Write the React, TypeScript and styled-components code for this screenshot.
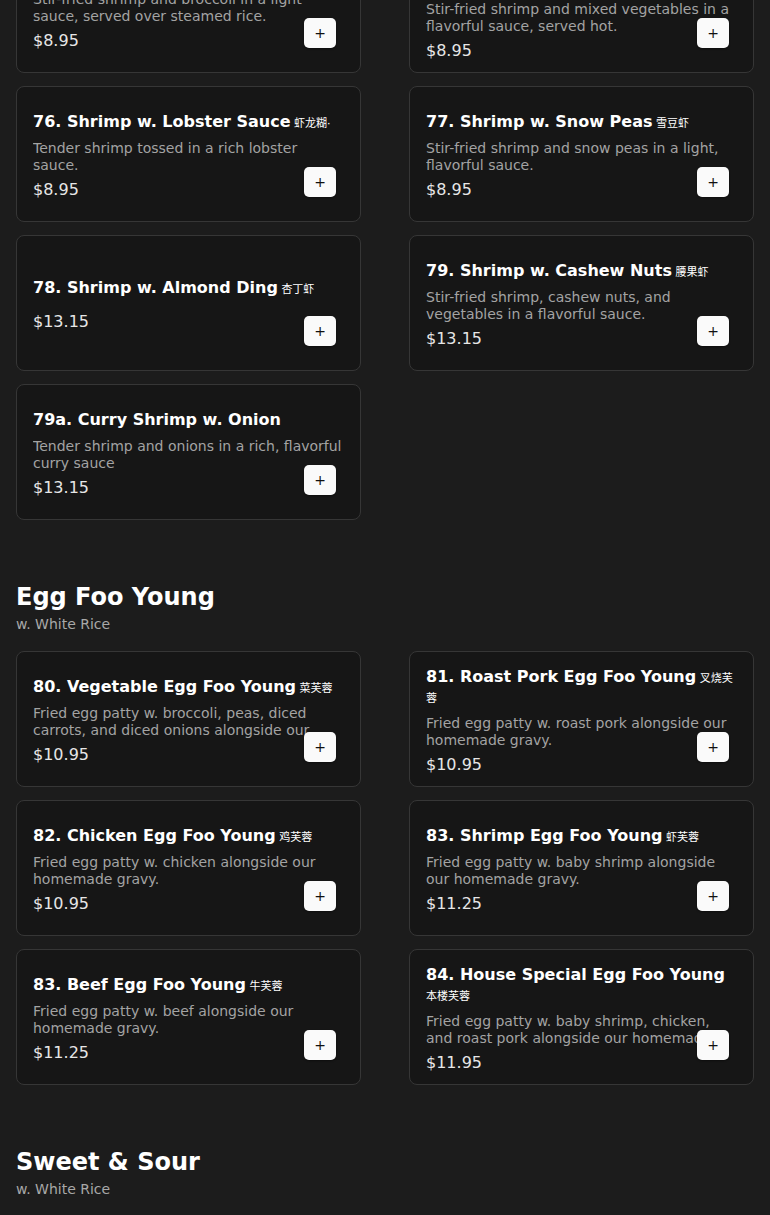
import styled, { createGlobalStyle } from "styled-components";

type MenuItem = {
  number: string;
  name: string;
  zh?: string;
  description?: string;
  price: string;
};

type Section = {
  title?: string;
  subtitle?: string;
  items: MenuItem[];
};

const sections: Section[] = [
  {
    items: [
      {
        number: "74",
        name: "Shrimp w. Broccoli",
        zh: "芥兰虾",
        description: "Stir-fried shrimp and broccoli in a light sauce, served over steamed rice.",
        price: "$8.95",
      },
      {
        number: "75",
        name: "Shrimp w. Mixed Chinese Vegetables",
        zh: "什菜虾",
        description: "Stir-fried shrimp and mixed vegetables in a flavorful sauce, served hot.",
        price: "$8.95",
      },
      {
        number: "76",
        name: "Shrimp w. Lobster Sauce",
        zh: "虾龙糊·",
        description: "Tender shrimp tossed in a rich lobster sauce.",
        price: "$8.95",
      },
      {
        number: "77",
        name: "Shrimp w. Snow Peas",
        zh: "雪豆虾",
        description: "Stir-fried shrimp and snow peas in a light, flavorful sauce.",
        price: "$8.95",
      },
      {
        number: "78",
        name: "Shrimp w. Almond Ding",
        zh: "杏丁虾",
        price: "$13.15",
      },
      {
        number: "79",
        name: "Shrimp w. Cashew Nuts",
        zh: "腰果虾",
        description: "Stir-fried shrimp, cashew nuts, and vegetables in a flavorful sauce.",
        price: "$13.15",
      },
      {
        number: "79a",
        name: "Curry Shrimp w. Onion",
        description: "Tender shrimp and onions in a rich, flavorful curry sauce",
        price: "$13.15",
      },
    ],
  },
  {
    title: "Egg Foo Young",
    subtitle: "w. White Rice",
    items: [
      {
        number: "80",
        name: "Vegetable Egg Foo Young",
        zh: "菜芙蓉",
        description:
          "Fried egg patty w. broccoli, peas, diced carrots, and diced onions alongside our homemade gravy.",
        price: "$10.95",
      },
      {
        number: "81",
        name: "Roast Pork Egg Foo Young",
        zh: "叉烧芙蓉",
        description: "Fried egg patty w. roast pork alongside our homemade gravy.",
        price: "$10.95",
      },
      {
        number: "82",
        name: "Chicken Egg Foo Young",
        zh: "鸡芙蓉",
        description: "Fried egg patty w. chicken alongside our homemade gravy.",
        price: "$10.95",
      },
      {
        number: "83",
        name: "Shrimp Egg Foo Young",
        zh: "虾芙蓉",
        description: "Fried egg patty w. baby shrimp alongside our homemade gravy.",
        price: "$11.25",
      },
      {
        number: "83",
        name: "Beef Egg Foo Young",
        zh: "牛芙蓉",
        description: "Fried egg patty w. beef alongside our homemade gravy.",
        price: "$11.25",
      },
      {
        number: "84",
        name: "House Special Egg Foo Young",
        zh: "本楼芙蓉",
        description:
          "Fried egg patty w. baby shrimp, chicken, and roast pork alongside our homemade gravy.",
        price: "$11.95",
      },
    ],
  },
  {
    title: "Sweet & Sour",
    subtitle: "w. White Rice",
    items: [
      {
        number: "85",
        name: "Sweet & Sour Chicken",
        zh: "甜酸鸡",
        description: "Crispy chicken served with our sweet and sour sauce.",
        price: "$10.95",
      },
      {
        number: "86",
        name: "Sweet & Sour Pork",
        zh: "甜酸肉",
        description: "Crispy pork served with our sweet and sour sauce.",
        price: "$10.95",
      },
    ],
  },
];

const GlobalStyle = createGlobalStyle`
  html, body {
    margin: 0;
    padding: 0;
    background: #1c1c1c;
  }
  body {
    font-family: "DejaVu Sans", "Noto Sans CJK SC", sans-serif;
    color: #fff;
    overflow: hidden;
  }
`;

const Page = styled.main`
  margin-top: -63px;
  padding: 0 16px 40px;
`;

const MenuSection = styled.section<{ $first?: boolean }>`
  padding-top: ${({ $first }) => ($first ? "0" : "61px")};
`;

const SectionHeader = styled.header`
  margin-bottom: 17px;
`;

const SectionTitle = styled.h2`
  margin: 0;
  font-size: 24px;
  line-height: 32px;
  font-weight: 700;
  color: #fff;
`;

const SectionSubtitle = styled.p`
  margin: 1px 0 0;
  font-size: 14px;
  line-height: 20px;
  color: #a8a8a8;
`;

const Grid = styled.div`
  display: grid;
  grid-template-columns: 1fr 1fr;
  column-gap: 48px;
  row-gap: 13px;
`;

const Card = styled.article`
  position: relative;
  box-sizing: border-box;
  min-height: 136px;
  padding: 14px 16px 11px;
  display: flex;
  flex-direction: column;
  justify-content: center;
  background: #161616;
  border: 1px solid #363636;
  border-radius: 8px;
`;

const Title = styled.h3`
  margin: 0 0 8px;
  font-size: 16px;
  line-height: 20px;
  font-weight: 700;
  color: #fff;
`;

const Zh = styled.span`
  font-size: 11px;
  line-height: 1;
  font-weight: 400;
`;

const Description = styled.p`
  margin: 0;
  max-height: 34px;
  overflow: hidden;
  font-size: 14px;
  line-height: 17px;
  color: #a3a3a3;
`;

const Price = styled.span`
  margin-top: 6px;
  font-size: 16px;
  line-height: 20px;
  color: #e6e6e6;
`;

const AddButton = styled.button`
  position: absolute;
  right: 24px;
  bottom: 24px;
  width: 32px;
  height: 30px;
  padding: 0;
  border: none;
  border-radius: 5px;
  background: #fafafa;
  color: #111;
  font-family: "DejaVu Sans", sans-serif;
  font-size: 14px;
  line-height: 30px;
  box-shadow: 0 1px 2px rgba(0, 0, 0, 0.4);
  cursor: pointer;
`;

const ItemCard = ({ item }: { item: MenuItem }) => (
  <Card>
    <Title>
      {item.number}. {item.name}
      {item.zh && <Zh> {item.zh}</Zh>}
    </Title>
    {item.description && <Description>{item.description}</Description>}
    <Price>{item.price}</Price>
    <AddButton aria-label={`Add ${item.name}`}>+</AddButton>
  </Card>
);

const App = () => {
  return (
    <>
      <GlobalStyle />
      <Page>
        {sections.map((section, i) => (
          <MenuSection key={i} $first={i === 0}>
            {section.title && (
              <SectionHeader>
                <SectionTitle>{section.title}</SectionTitle>
                <SectionSubtitle>{section.subtitle}</SectionSubtitle>
              </SectionHeader>
            )}
            <Grid>
              {section.items.map((item) => (
                <ItemCard key={item.number + item.name} item={item} />
              ))}
            </Grid>
          </MenuSection>
        ))}
      </Page>
    </>
  );
};

export default App;
